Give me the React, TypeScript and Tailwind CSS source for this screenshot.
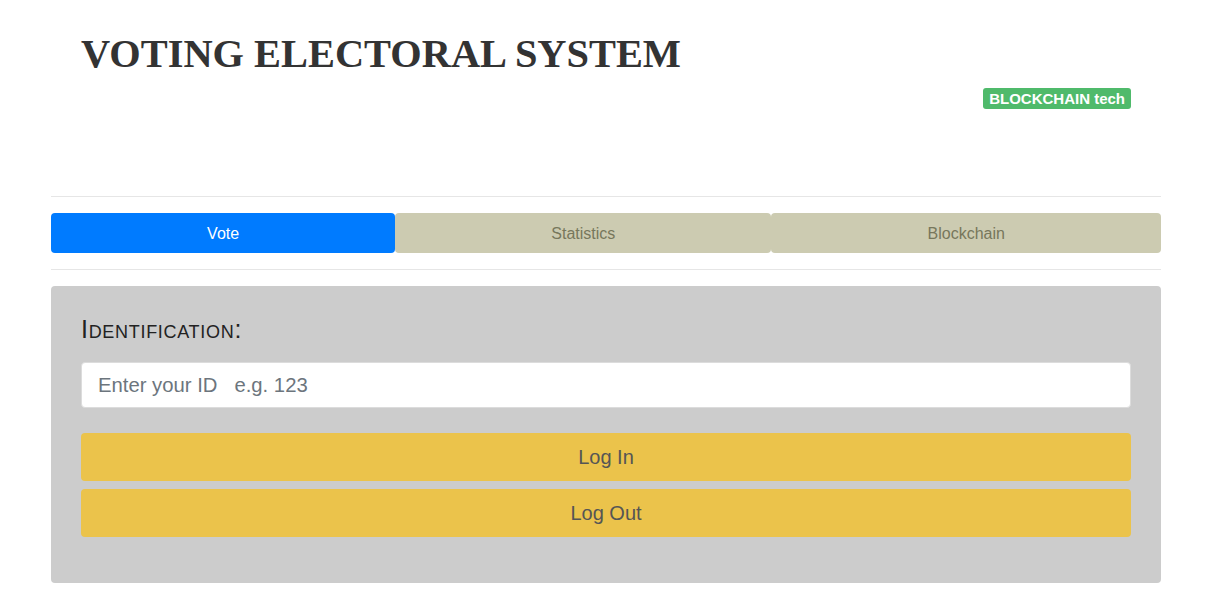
import React from "react";

export default function App() {
  return (
    <div className="min-h-[614px] bg-white" style={{ fontFamily: '"Liberation Sans", Arial, sans-serif' }}>
      <div className="ml-[51px] w-[1110px]">
        <div className="h-[196px] px-[30px] pt-[30px]">
          <h1 className="text-[40.4px] leading-[48px] font-bold text-[#333333] [font-family:'Liberation_Serif',serif]">
            VOTING ELECTORAL SYSTEM
          </h1>
          <div className="mt-[10px] flex justify-end">
            <span className="rounded-[3px] bg-[#4fba6b] px-[6px] text-[15px] leading-[21px] font-bold text-white">
              BLOCKCHAIN tech
            </span>
          </div>
        </div>
        <div className="h-px bg-[#e6e6e6]" />
        <div className="mt-[16px] flex h-[40px]">
          <button className="flex-auto rounded-[4px] bg-[#007bff] pt-px text-[16px] text-white">Vote</button>
          <button className="flex-auto rounded-[4px] bg-[#cccbb1] pt-px text-[16px] text-[#77775c]">Statistics</button>
          <button className="flex-auto rounded-[4px] bg-[#cccbb1] pt-px text-[16px] text-[#77775c]">Blockchain</button>
        </div>
        <div className="mt-[16px] h-px bg-[#e6e6e6]" />
        <div className="mt-[16px] rounded-[4px] bg-[#cccccc] px-[30px] pt-[28px] pb-[46px]">
          <div className="text-[25px] leading-[30px] tracking-[0.7px] text-[#222222] [font-variant:small-caps]">Identification:</div>
          <input
            className="mt-[18px] block h-[46px] w-full rounded-[4px] border border-[#dcdcdc] bg-white px-[16px] text-[20.3px] text-[#495057] outline-none placeholder:text-[#6c757d]"
            placeholder="Enter your ID   e.g. 123"
          />
          <div className="mt-[25px] flex flex-col gap-[8px]">
            <button className="h-[48px] w-full rounded-[4px] bg-[#ebc34b] text-[20px] text-[#555555]">Log In</button>
            <button className="h-[48px] w-full rounded-[4px] bg-[#ebc34b] text-[20px] text-[#555555]">Log Out</button>
          </div>
        </div>
      </div>
    </div>
  );
}
